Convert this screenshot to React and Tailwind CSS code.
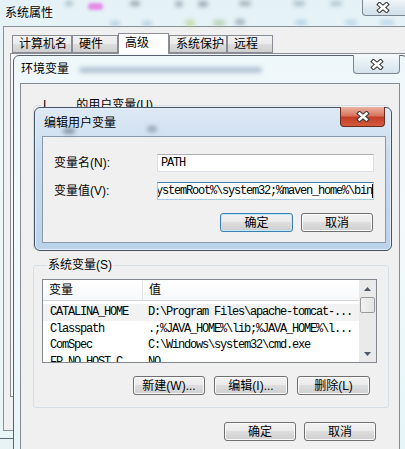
import React from "react";

const CloseX = () => (
  <svg width="14" height="11" viewBox="0 0 14 11">
    <path d="M3.5 2.5L10.5 8.5M10.5 2.5L3.5 8.5" stroke="#3c3c3c" strokeWidth="4.6" strokeLinecap="square" />
    <path d="M3.5 2.5L10.5 8.5M10.5 2.5L3.5 8.5" stroke="#fff" strokeWidth="2.4" strokeLinecap="square" />
  </svg>
);

const Btn = ({ children, def, w }) => (
  <div
    className={`${w} h-[19px] flex items-center justify-center rounded-[3px] border ${
      def ? "border-[#3c7fb1] shadow-[inset_0_0_0_1px_#bfe8fb]" : "border-[#707070] shadow-[inset_0_0_0_1px_#fbfbfb]"
    } bg-[linear-gradient(#f2f2f2,#ebebeb_45%,#dddddd_50%,#cfcfcf)] text-[12px] leading-none`}
  >
    {children}
  </div>
);

const Arrow = ({ up }) => (
  <svg width="7" height="4" viewBox="0 0 7 4">
    <path d={up ? "M0 4L3.5 0L7 4Z" : "M0 0L3.5 4L7 0Z"} fill="#4d5866" />
  </svg>
);

const tabs = [
  { label: "计算机名", w: "w-[60px]" },
  { label: "硬件", w: "w-[46px]" },
  { label: "高级", w: "w-[51px]", active: true },
  { label: "系统保护", w: "w-[58px]" },
  { label: "远程", w: "w-[46px]" },
];

const rows = [
  ["CATALINA_HOME", "D:\\Program Files\\apache-tomcat-..."],
  ["Classpath", ".;%JAVA_HOME%\\lib;%JAVA_HOME%\\l..."],
  ["ComSpec", "C:\\Windows\\system32\\cmd.exe"],
  ["FP_NO_HOST_C", "NO"],
];

export default function App() {
  return (
    <div className="relative w-[405px] h-[449px] overflow-hidden bg-[#e8f3f5] text-[12px] text-black font-['Liberation_Sans','Noto_Sans_CJK_SC',sans-serif]">
      {/* 系统属性 */}
      <div className="absolute left-[-6px] top-[-6px] w-[440px] h-[445px] rounded-[7px] border border-[#5d6b77] bg-[linear-gradient(180deg,#e4f1f6,#eef8f8_30%,#e9f6f7)]">
        <div className="relative h-[31px]">
          {/* blurred desktop behind the glass */}
          <div className="absolute left-[70px] top-[6px] w-[8px] h-[5px] rounded-full bg-[#8aa0b0] blur-[2px] opacity-60" />
          <div className="absolute left-[93px] top-[8px] w-[15px] h-[7px] rounded-full bg-[#e58be8] blur-[1.5px]" />
          <div className="absolute left-[135px] top-[6px] w-[10px] h-[5px] rounded-full bg-[#7c8a96] blur-[2px] opacity-70" />
          <div className="absolute left-[180px] top-[6px] w-[8px] h-[6px] rounded-full bg-[#7c8a96] blur-[2px] opacity-60" />
          <div className="absolute left-[203px] top-[6px] w-[10px] h-[6px] rounded-full bg-[#6f7f8e] blur-[2px] opacity-60" />
          <div className="absolute left-[244px] top-[6px] w-[12px] h-[5px] rounded-full bg-[#7c8a96] blur-[2px] opacity-60" />
          <div className="absolute left-[298px] top-[6px] w-[12px] h-[5px] rounded-full bg-[#8aa0b0] blur-[2px] opacity-60" />
          <div className="absolute left-[335px] top-[6px] w-[12px] h-[5px] rounded-full bg-[#8aa0b0] blur-[2px] opacity-50" />
          <div className="absolute left-[115px] top-[26px] w-[10px] h-[5px] rounded-full bg-[#9fc4dc] blur-[2px] opacity-70" />
          <div className="absolute left-[147px] top-[26px] w-[10px] h-[5px] rounded-full bg-[#9fc4dc] blur-[2px] opacity-70" />
          <div className="absolute left-[190px] top-[25px] w-[10px] h-[6px] rounded-full bg-[#b5d08a] blur-[2px] opacity-70" />
          <div className="absolute left-[218px] top-[25px] w-[12px] h-[6px] rounded-full bg-[#a8c6a0] blur-[2px] opacity-70" />
          <div className="absolute left-[240px] top-[24px] w-[10px] h-[6px] rounded-full bg-[#7b8e9c] blur-[2px] opacity-60" />
          <div className="absolute left-[300px] top-[25px] w-[12px] h-[5px] rounded-full bg-[#9fc4dc] blur-[2px] opacity-70" />
          <div className="absolute left-[350px] top-[25px] w-[12px] h-[5px] rounded-full bg-[#9fc4dc] blur-[2px] opacity-60" />
          <div className="absolute left-[385px] top-[25px] w-[14px] h-[5px] rounded-full bg-[#9fc4dc] blur-[2px] opacity-60" />
          <div className="relative pl-[10px] pt-[11px] leading-[14px]">系统属性</div>
          <div className="absolute left-[367px] top-[4px] w-[50px] h-[17px] rounded-b-[4px] border border-t-0 border-[#7b8690] bg-[linear-gradient(#f3f8fb,#dfeaf1_50%,#d2e0ea)] flex items-center justify-start pl-[13px]">
            <CloseX />
          </div>
        </div>
        <div className="ml-[8px] h-[405px] border border-[#8b8f96] bg-[#f0f0f0]">
          <div className="flex items-end h-[20px] ml-[8px] mt-[6px]">
            {tabs.map((t) => (
              <div
                key={t.label}
                className={`${t.w} ${
                  t.active
                    ? "relative z-10 h-[21px] -mb-px border-b-0 bg-white pt-[2px]"
                    : "h-[18px] bg-[linear-gradient(#f2f2f2,#ebebeb_50%,#dddddd_50%,#cfcfcf)] pt-[1px]"
                } border border-[#898c95] pl-[6px] leading-[15px] text-[12px]`}
              >
                {t.label}
              </div>
            ))}
          </div>
          <div className="ml-[6px] h-[344px] border border-[#898c95] bg-[#f7f7f7]" />
        </div>
      </div>

      {/* 环境变量 */}
      <div className="absolute left-[13px] top-[55px] w-[395px] h-[400px] rounded-t-[6px] border border-[#56626e] bg-[linear-gradient(180deg,#eef7fa,#f3fafb_40%,#e6f5f8)]">
        <div className="relative h-[27px] flex items-start">
          <div className="pl-[7px] pt-[6px] leading-[14px]">环境变量</div>
          <div className="ml-[10px] mt-[11px] w-[183px] h-[6px] rounded-full bg-[#8ea4bb] blur-[2px] opacity-60" />
          <div className="absolute left-[339px] top-[-1px] w-[47px] h-[19px] rounded-b-[4px] border border-t-0 border-[#7b8690] bg-[linear-gradient(#f6fafc,#e3edf3_50%,#d6e3ec)] flex items-center justify-center">
            <CloseX />
          </div>
        </div>
        <div className="ml-[6px] w-[380px] h-[372px] border border-[#838b94] bg-[#f0f0f0] px-[12px] pt-[14px]">
          <fieldset className="w-[356px] h-[152px] rounded-[3px] border border-[#d5dfe5]">
            <legend className="ml-[8px] px-px leading-[14px]">
              <span>I</span>
              <span className="ml-[30px]">的用户变量(U)</span>
            </legend>
          </fieldset>
          <fieldset className="mt-[8px] w-[356px] h-[150px] rounded-[3px] border border-[#d5dfe5] px-[8px]">
            <legend className="ml-[5px] px-px leading-[14px]">系统变量(S)</legend>
            <div className="mt-[7px] w-[335px] h-[84px] border border-[#828790] bg-white flex">
              <div className="w-[316px] overflow-hidden">
                <div className="flex h-[21px] border-b border-[#d5d5d5] bg-[linear-gradient(#ffffff,#f7f8fa)] text-[12px] leading-[20px]">
                  <div className="w-[100px] pl-[6px] border-r border-[#e3e4e6]">变量</div>
                  <div className="pl-[6px]">值</div>
                </div>
                <div className="pt-[3px] font-['Liberation_Mono',monospace] text-[12px] tracking-[-1.2px] leading-[16.5px]">
                  {rows.map(([k, v], i) => (
                    <div key={k} className={`flex h-[16.5px] ${i === 0 ? "bg-[#f2f2f2]" : ""}`}>
                      <div className="w-[99px] pl-[7px] whitespace-nowrap">{k}</div>
                      <div className="pl-[6px] whitespace-nowrap">{v}</div>
                    </div>
                  ))}
                </div>
              </div>
              <div className="w-[17px] flex flex-col bg-[#eaeaea]">
                <div className="h-[17px] flex items-center justify-center">
                  <Arrow up />
                </div>
                <div className="h-[16px] mx-px rounded-[2px] border border-[#9a9a9a] bg-[linear-gradient(90deg,#f2f2f2,#e4e4e4)]" />
                <div className="flex-1" />
                <div className="h-[17px] flex items-center justify-center">
                  <Arrow />
                </div>
              </div>
            </div>
            <div className="mt-[13px] flex justify-end gap-[9px] pr-[10px]">
              <Btn w="w-[72px]">新建(W)...</Btn>
              <Btn w="w-[74px]">编辑(I)...</Btn>
              <Btn w="w-[73px]">删除(L)</Btn>
            </div>
          </fieldset>
          <div className="mt-[14px] flex justify-end gap-[8px] pr-[11px]">
            <Btn w="w-[72px]">确定</Btn>
            <Btn w="w-[72px]">取消</Btn>
          </div>
        </div>
      </div>

      {/* 编辑用户变量 */}
      <div className="absolute left-[34px] top-[107px] w-[358px] h-[144px] rounded-[6px] border border-[#3f5266] bg-[linear-gradient(180deg,#dde9f5,#c8dcef_35%,#bad2ea)] shadow-[inset_0_0_0_1px_#e6f0fa]">
        <div className="relative h-[28px] flex items-start">
          <div className="pl-[9px] pt-[8px] leading-[14px]">编辑用户变量</div>
          <div className="absolute left-[28px] top-[20px] w-[12px] h-[6px] rounded-full bg-[#5a6a7a] blur-[2px] opacity-60" />
          <div className="absolute left-[112px] top-[18px] w-[10px] h-[6px] rounded-full bg-[#5a6a7a] blur-[2px] opacity-50" />
          <div className="absolute left-[305px] top-[-1px] w-[45px] h-[20px] rounded-b-[4px] border border-t-0 border-[#6b2a1e] bg-[linear-gradient(#eab3a3,#d9755e_45%,#c23e26_55%,#d45c3e)] flex items-center justify-center">
            <CloseX />
          </div>
        </div>
        <div className="ml-[7px] w-[344px] h-[107px] border border-[#8a9aab] bg-[#f0f0f0] pt-[17px] pl-[11px]">
          <div className="flex items-center">
            <div className="w-[103px]">变量名(N):</div>
            <div className="w-[217px] h-[18px] border border-[#dbdfe6] border-t-[#abadb3] bg-white pl-[3px] font-['Liberation_Mono',monospace] text-[12px] tracking-[-1.2px] leading-[16px]">
              PATH
            </div>
          </div>
          <div className="mt-[10px] flex items-center">
            <div className="w-[103px]">变量值(V):</div>
            <div className="w-[217px] h-[18px] border border-[#a4c9e3] border-t-[#3d7bad] bg-white flex justify-end overflow-hidden font-['Liberation_Mono',monospace] text-[12px] tracking-[-1.2px] leading-[16px] whitespace-nowrap">
              <span>%SystemRoot%\system32;%maven_home%\bin</span>
              <span className="w-px h-[14px] mt-px bg-black shrink-0" />
            </div>
          </div>
          <div className="mt-[13px] flex justify-end gap-[8px] pr-[12px]">
            <Btn def w="w-[73px]">确定</Btn>
            <Btn w="w-[72px]">取消</Btn>
          </div>
        </div>
      </div>
    </div>
  );
}
